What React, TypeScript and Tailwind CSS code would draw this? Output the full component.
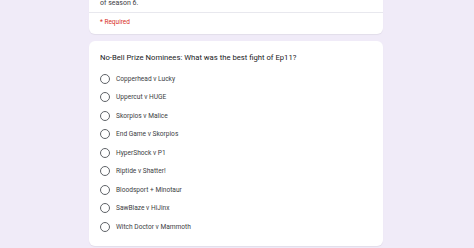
import React from "react";

const options = [
  "Copperhead v Lucky",
  "Uppercut v HUGE",
  "Skorpios v Malice",
  "End Game v Skorpios",
  "HyperShock v P1",
  "Riptide v Shatter!",
  "Bloodsport + Minotaur",
  "SawBlaze v HiJinx",
  "Witch Doctor v Mammoth",
];

export default function App() {
  return (
    <div className="w-[474px] h-[248px] overflow-hidden bg-[#f0ebf8] font-['Roboto',sans-serif] text-[#202124]">
      <div className="ml-[89px] w-[294px] flex flex-col">
        {/* end of the header card */}
        <div className="-mt-[3px] bg-white rounded-b-[6px] shadow-[0_1px_1px_rgba(0,0,0,0.06)]">
          <div className="px-[11px] pb-[3px] text-[7px] leading-[12px] text-[#3c4043]">of season 6.</div>
          <div className="h-px bg-[#e8e8ee]" />
          <div className="px-[11px] pt-[3px] pb-[6px] text-[6.5px] leading-[12px] text-[#d93025]">* Required</div>
        </div>

        {/* question card */}
        <div className="mt-[7px] bg-white rounded-[6px] shadow-[0_1px_1px_rgba(0,0,0,0.06)] px-[11px] pt-[11px] pb-[14px]">
          <div className="text-[7.7px] leading-[12px]">
            No-Bell Prize Nominees: What was the best fight of Ep11?
          </div>
          <div className="mt-[10px] flex flex-col gap-[8.45px]">
            {options.map((o) => (
              <label key={o} className="flex items-center h-[10px] gap-[6px]">
                <span className="w-[10px] h-[10px] rounded-full border-[1.3px] border-[#5f6368] shrink-0" />
                <span className="text-[6.6px] leading-[10px] text-[#3c4043]">{o}</span>
              </label>
            ))}
          </div>
        </div>
      </div>
    </div>
  );
}
